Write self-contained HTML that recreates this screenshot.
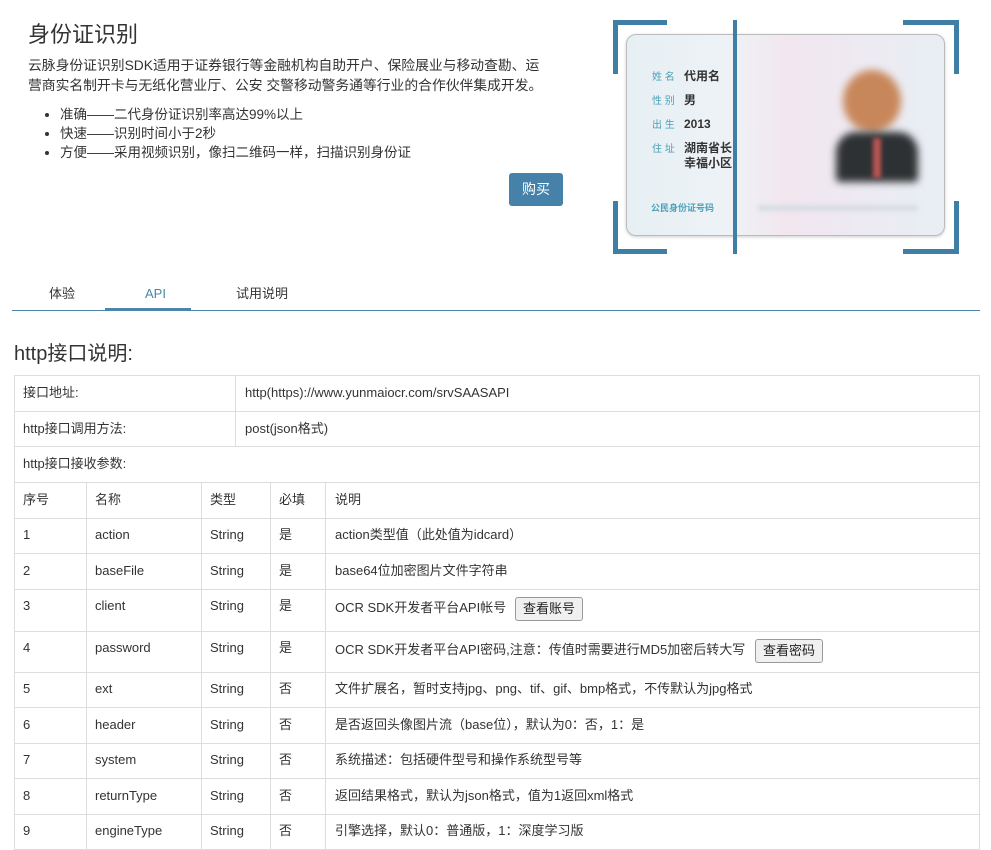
<!DOCTYPE html>
<html><head><meta charset="utf-8"><style>
*{margin:0;padding:0;box-sizing:border-box}
body{width:991px;height:850px;background:#fff;font-family:"Liberation Sans","Noto Sans CJK SC",sans-serif;color:#333;font-size:13px;position:relative;overflow:hidden}
.a{position:absolute;white-space:nowrap;line-height:18px}
.h{position:absolute;left:14px;width:966px;height:1px;background:#ddd}
.v{position:absolute;width:1px;background:#ddd}
.btn{position:absolute;border:1px solid #999;border-radius:3px;background:#f0f0f0;font-size:13px;padding:0 7px;height:24px;line-height:22px;color:#222}
.br{position:absolute;background:#3f7fa6}
</style></head><body>
<div class="a" style="left:28px;top:20px;font-size:22px;line-height:30px;color:#333">身份证识别</div>
<div class="a" style="left:28px;top:56px;line-height:20px;font-size:13.8px">云脉身份证识别SDK适用于证券银行等金融机构自助开户、保险展业与移动查勘、运<br>营商实名制开卡与无纸化营业厅、公安 交警移动警务通等行业的合作伙伴集成开发。</div>
<ul class="a" style="left:60px;top:105px;line-height:19px;font-size:13.5px">
<li>准确——二代身份证识别率高达99%以上</li>
<li>快速——识别时间小于2秒</li>
<li>方便——采用视频识别，像扫二维码一样，扫描识别身份证</li>
</ul>
<div class="a" style="left:509px;top:173px;width:54px;height:33px;background:#4581a8;border-radius:3px;color:#fff;font-size:14px;line-height:33px;text-align:center">购买</div>

<!-- card -->
<div class="a" style="left:626px;top:34px;width:319px;height:202px;border-radius:10px;border:1px solid #bbb;background:linear-gradient(90deg,#e6f0f4 0%,#eef2f6 33%,#f2e6ef 50%,#e8eef4 100%);box-shadow:0 1px 3px rgba(0,0,0,.2)"></div>
<div class="a" style="left:652px;top:66px;font-size:10px;color:#4aa0b8;line-height:24px">姓 名<br>性 别<br>出 生<br>住 址</div>
<div class="a" style="left:684px;top:64px;font-size:12px;font-weight:bold;color:#333;line-height:24px">代用名<br>男<br>2013<br>湖南省长<br><span style="position:relative;top:-9px">幸福小区</span></div>
<div class="a" style="left:651px;top:199px;font-size:9px;color:#4aa0b8;font-weight:bold">公民身份证号码</div>
<div class="a" style="left:758px;top:205px;width:160px;height:6px;background:#d8dde4;filter:blur(2px)"></div>
<div class="a" style="left:843px;top:70px;width:58px;height:62px;border-radius:50%;background:#c8875a;filter:blur(4px)"></div>
<div class="a" style="left:836px;top:132px;width:82px;height:50px;border-radius:20px 20px 4px 4px;background:#2e3133;filter:blur(4px)"></div>
<div class="a" style="left:873px;top:138px;width:8px;height:40px;background:#b55;filter:blur(2px)"></div>
<div class="br" style="left:733px;top:20px;width:4px;height:234px"></div>
<div class="br" style="left:613px;top:20px;width:54px;height:5px"></div>
<div class="br" style="left:613px;top:20px;width:5px;height:54px"></div>
<div class="br" style="left:903px;top:20px;width:56px;height:5px"></div>
<div class="br" style="left:954px;top:20px;width:5px;height:54px"></div>
<div class="br" style="left:613px;top:249px;width:54px;height:5px"></div>
<div class="br" style="left:613px;top:201px;width:5px;height:53px"></div>
<div class="br" style="left:903px;top:249px;width:56px;height:5px"></div>
<div class="br" style="left:954px;top:201px;width:5px;height:53px"></div>

<!-- tabs -->
<div class="a" style="left:49px;top:285px;font-size:13px">体验</div>
<div class="a" style="left:145px;top:285px;font-size:13px;color:#4a86a8">API</div>
<div class="a" style="left:236px;top:285px;font-size:13px">试用说明</div>
<div class="a" style="left:12px;top:310px;width:968px;height:1px;background:#4a86a8"></div>
<div class="a" style="left:105px;top:308px;width:86px;height:3px;background:#4a86a8"></div>

<div class="a" style="left:14px;top:341px;font-size:20px;line-height:26px;color:#333">http接口说明:</div>

<!-- table -->
<div class="a" style="left:14px;top:375px;width:966px;height:475px;border:1px solid #ddd;border-bottom:none"></div>
<div class="h" style="top:411px"></div><div class="h" style="top:446px"></div><div class="h" style="top:482px"></div><div class="h" style="top:518px"></div><div class="h" style="top:553px"></div><div class="h" style="top:589px"></div><div class="h" style="top:631px"></div><div class="h" style="top:672px"></div><div class="h" style="top:707px"></div><div class="h" style="top:743px"></div><div class="h" style="top:778px"></div><div class="h" style="top:814px"></div><div class="h" style="top:849px"></div>
<div class="v" style="left:235px;top:376px;height:70px"></div>
<div class="v" style="left:86px;top:482px;height:368px"></div>
<div class="v" style="left:201px;top:482px;height:368px"></div>
<div class="v" style="left:270px;top:482px;height:368px"></div>
<div class="v" style="left:325px;top:482px;height:368px"></div>

<div class="a" style="left:23px;top:384px">接口地址:</div>
<div class="a" style="left:245px;top:384px">http(https)://www.yunmaiocr.com/srvSAASAPI</div>
<div class="a" style="left:23px;top:420px">http接口调用方法:</div>
<div class="a" style="left:245px;top:420px">post(json格式)</div>
<div class="a" style="left:23px;top:455px">http接口接收参数:</div>

<div class="a" style="left:23px;top:491px">序号</div><div class="a" style="left:95px;top:491px">名称</div><div class="a" style="left:210px;top:491px">类型</div><div class="a" style="left:279px;top:491px">必填</div><div class="a" style="left:335px;top:491px">说明</div>

<div class="a" style="left:23px;top:526px">1</div><div class="a" style="left:95px;top:526px">action</div><div class="a" style="left:210px;top:526px">String</div><div class="a" style="left:279px;top:526px">是</div><div class="a" style="left:335px;top:526px">action类型值（此处值为idcard）</div>
<div class="a" style="left:23px;top:562px">2</div><div class="a" style="left:95px;top:562px">baseFile</div><div class="a" style="left:210px;top:562px">String</div><div class="a" style="left:279px;top:562px">是</div><div class="a" style="left:335px;top:562px">base64位加密图片文件字符串</div>
<div class="a" style="left:23px;top:597px">3</div><div class="a" style="left:95px;top:597px">client</div><div class="a" style="left:210px;top:597px">String</div><div class="a" style="left:279px;top:597px">是</div><div class="a" style="left:335px;top:599px">OCR SDK开发者平台API帐号</div>
<div class="btn" style="left:515px;top:597px">查看账号</div>
<div class="a" style="left:23px;top:639px">4</div><div class="a" style="left:95px;top:639px">password</div><div class="a" style="left:210px;top:639px">String</div><div class="a" style="left:279px;top:639px">是</div><div class="a" style="left:335px;top:641px">OCR SDK开发者平台API密码,注意：传值时需要进行MD5加密后转大写</div>
<div class="btn" style="left:755px;top:639px">查看密码</div>
<div class="a" style="left:23px;top:680px">5</div><div class="a" style="left:95px;top:680px">ext</div><div class="a" style="left:210px;top:680px">String</div><div class="a" style="left:279px;top:680px">否</div><div class="a" style="left:335px;top:680px">文件扩展名，暂时支持jpg、png、tif、gif、bmp格式，不传默认为jpg格式</div>
<div class="a" style="left:23px;top:716px">6</div><div class="a" style="left:95px;top:716px">header</div><div class="a" style="left:210px;top:716px">String</div><div class="a" style="left:279px;top:716px">否</div><div class="a" style="left:335px;top:716px">是否返回头像图片流（base位），默认为0：否，1：是</div>
<div class="a" style="left:23px;top:751px">7</div><div class="a" style="left:95px;top:751px">system</div><div class="a" style="left:210px;top:751px">String</div><div class="a" style="left:279px;top:751px">否</div><div class="a" style="left:335px;top:751px">系统描述：包括硬件型号和操作系统型号等</div>
<div class="a" style="left:23px;top:787px">8</div><div class="a" style="left:95px;top:787px">returnType</div><div class="a" style="left:210px;top:787px">String</div><div class="a" style="left:279px;top:787px">否</div><div class="a" style="left:335px;top:787px">返回结果格式，默认为json格式，值为1返回xml格式</div>
<div class="a" style="left:23px;top:822px">9</div><div class="a" style="left:95px;top:822px">engineType</div><div class="a" style="left:210px;top:822px">String</div><div class="a" style="left:279px;top:822px">否</div><div class="a" style="left:335px;top:822px">引擎选择，默认0：普通版，1：深度学习版</div>
</body></html>
